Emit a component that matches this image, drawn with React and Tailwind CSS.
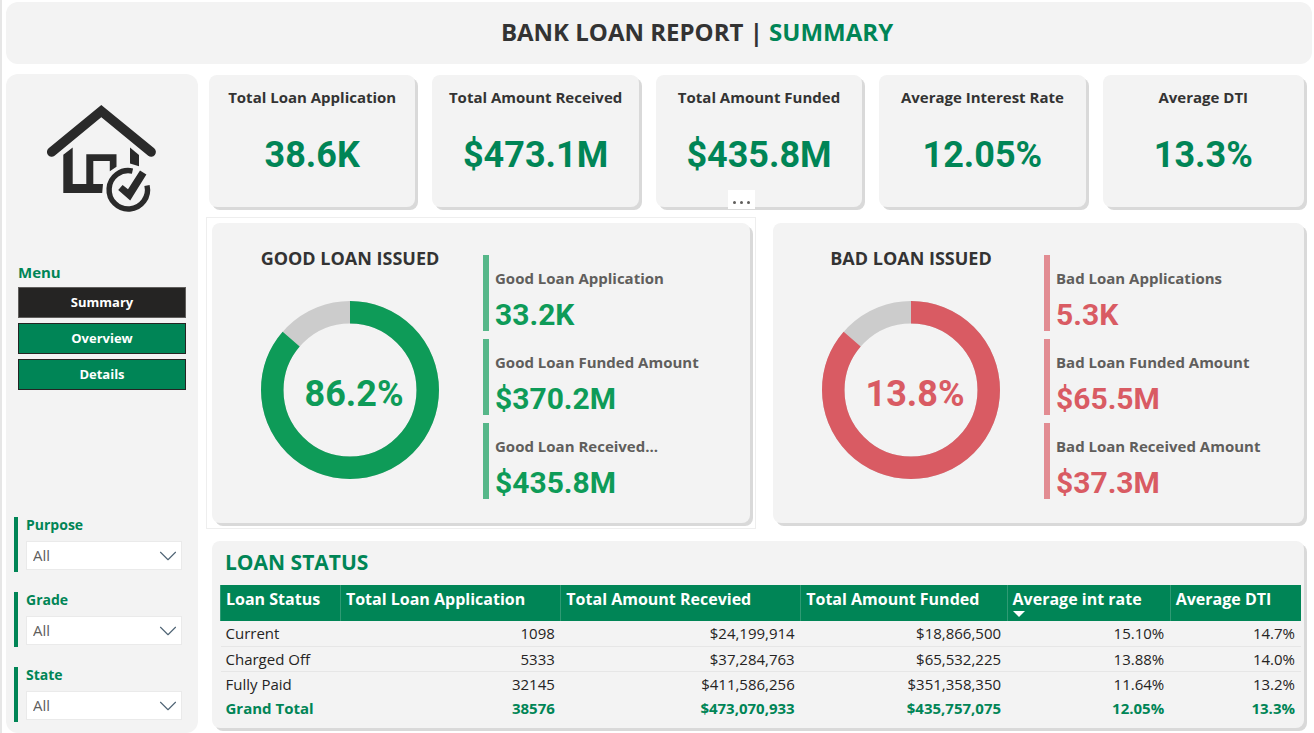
import { ChevronDown } from "lucide-react";

const kpis = [
  { label: "Total Loan Application", value: "38.6K" },
  { label: "Total Amount Received", value: "$473.1M" },
  { label: "Total Amount Funded", value: "$435.8M" },
  { label: "Average Interest Rate", value: "12.05%" },
  { label: "Average DTI", value: "13.3%" },
];

const goodStats = [
  { label: "Good Loan Application", value: "33.2K" },
  { label: "Good Loan Funded Amount", value: "$370.2M" },
  { label: "Good Loan Received...", value: "$435.8M" },
];

const badStats = [
  { label: "Bad Loan Applications", value: "5.3K" },
  { label: "Bad Loan Funded Amount", value: "$65.5M" },
  { label: "Bad Loan Received Amount", value: "$37.3M" },
];

const columns = [
  { name: "Loan Status", width: "w-[11.1%]" },
  { name: "Total Loan Application", width: "w-[20.4%]" },
  { name: "Total Amount Recevied", width: "w-[22.2%]" },
  { name: "Total Amount Funded", width: "w-[19.1%]" },
  { name: "Average int rate", width: "w-[15.1%]", sorted: true },
  { name: "Average DTI", width: "w-[12.1%]" },
];

const rows = [
  ["Current", "1098", "$24,199,914", "$18,866,500", "15.10%", "14.7%"],
  ["Charged Off", "5333", "$37,284,763", "$65,532,225", "13.88%", "14.0%"],
  ["Fully Paid", "32145", "$411,586,256", "$351,358,350", "11.64%", "13.2%"],
];

const totals = ["Grand Total", "38576", "$473,070,933", "$435,757,075", "12.05%", "13.3%"];

function HouseLogo() {
  return (
    <svg viewBox="44 100 116 116" className="h-[116px] w-[116px]" fill="#2a2a2a" aria-hidden="true">
      <path d="M51.6 152 101.3 111 151.2 152" fill="none" stroke="#2a2a2a" strokeWidth="9.4" strokeLinecap="round" />
      <path d="M63.3 154.8 72.7 147.6V184H86.3V154.3H116.5V166.8L109.8 171.2V161H93.3V184H103L102.2 193H63.3Z" />
      <path d="M130 147.5 139 155V166.3L130 163.5Z" />
      <path d="M132.5 171.1A19.2 19.2 0 1 0 147 185.5" fill="none" stroke="#2a2a2a" strokeWidth="5.4" />
      <path d="M118.2 190 122.6 185 128 189.3 140 170.4 146.4 174.5 130.2 200.6Z" />
    </svg>
  );
}

function Donut({ color, value, textClass }) {
  const r = 77.75;
  const length = 2 * Math.PI * r;
  return (
    <div className="grid h-[178px] w-[178px] place-items-center">
      <svg viewBox="0 0 178 178" className="col-start-1 row-start-1 h-full w-full" aria-hidden="true">
        <g fill="none" strokeWidth="22.5" transform="rotate(-90 89 89)">
          <circle cx="89" cy="89" r={r} stroke="#cccccc" />
          <circle cx="89" cy="89" r={r} stroke={color} strokeDasharray={`${length * 0.862} ${length}`} />
        </g>
      </svg>
      <span className={`col-start-1 row-start-1 pt-2 pl-2 font-[Roboto,sans-serif] text-[36px] font-bold ${textClass}`}>{value}</span>
    </div>
  );
}

function LoanPanel({ title, color, textClass, barClass, percent, stats }) {
  return (
    <section className="flex h-[300px] rounded-lg bg-[#f3f3f3] shadow-[3px_3px_0_#d9d9d9]">
      <div className="flex w-[271px] shrink-0 flex-col items-center pt-[23px] pl-[5px]">
        <h2 className="text-[18px] leading-6 font-bold text-[#333]">{title}</h2>
        <div className="mt-[31px]">
          <Donut color={color} value={percent} textClass={textClass} />
        </div>
      </div>
      <dl className="flex min-w-0 flex-1 flex-col gap-2 pt-8">
        {stats.map((s) => (
          <div key={s.label} className={`flex h-[76px] flex-col justify-end gap-[11px] border-l-[6px] pl-[6px] ${barClass}`}>
            <dt className="text-[15px] leading-5 font-bold whitespace-nowrap text-[#605e5c]">{s.label}</dt>
            <dd className={`font-[Roboto,sans-serif] text-[30px] leading-8 font-bold ${textClass}`}>{s.value}</dd>
          </div>
        ))}
      </dl>
    </section>
  );
}

function Slicer({ label }) {
  const id = `slicer-${label.toLowerCase()}`;
  return (
    <div className="h-[55px] border-l-4 border-[#008556] pl-2">
      <label htmlFor={id} className="block text-[14px] leading-4 font-bold text-[#008556]">
        {label}
      </label>
      <div className="mt-2 grid items-center">
        <select
          id={id}
          className="col-start-1 row-start-1 h-[29px] w-full appearance-none border border-[#eaeaea] bg-white px-[6px] text-[15px] text-[#605e5c]"
        >
          <option>All</option>
        </select>
        <ChevronDown
          className="pointer-events-none col-start-1 row-start-1 mr-1 h-[20px] w-[20px] justify-self-end text-[#4f6475]"
          viewBox="4 4 16 16"
          strokeWidth={0.9}
          aria-hidden="true"
        />
      </div>
    </div>
  );
}

export default function App() {
  return (
    <div className="flex min-h-screen flex-col gap-[10px] border-l-2 border-[#e6e6e6] bg-white pt-[2px] pr-[2px] pl-1 font-['Open_Sans','Noto_Sans',sans-serif] text-[#252423]">
      <header className="flex h-[62px] items-center justify-center rounded-xl bg-[#f3f3f3] pb-[2px] pl-19">
        <h1 className="text-[24px] leading-8 font-bold text-[#333]">
          BANK LOAN REPORT | <span className="text-[#008556]">SUMMARY</span>
        </h1>
      </header>

      <div className="flex flex-1 gap-2">
        <aside className="flex w-[192px] shrink-0 flex-col rounded-xl bg-[#f3f3f3] pb-[11px]">
          <div className="flex justify-center pt-[26px]">
            <HouseLogo />
          </div>
          <nav className="mt-[46px] flex flex-col px-3" aria-labelledby="menu-title">
            <h2 id="menu-title" className="text-[15px] leading-5 font-bold text-[#008556]">
              Menu
            </h2>
            <div className="mt-[5px] flex flex-col gap-[5px]">
              <button className="h-[31px] border border-[#605e5c] bg-[#252423] text-[13px] font-bold text-white">Summary</button>
              <button className="h-[31px] border border-[#252423] bg-[#008556] text-[13px] font-bold text-white">Overview</button>
              <button className="h-[31px] border border-[#252423] bg-[#008556] text-[13px] font-bold text-white">Details</button>
            </div>
          </nav>
          <div className="mt-auto flex flex-col gap-5 pr-4 pl-2">
            <Slicer label="Purpose" />
            <Slicer label="Grade" />
            <Slicer label="State" />
          </div>
        </aside>

        <main className="min-w-0 flex-1 pt-px pr-2 pb-[5px]">
          <div className="grid grid-cols-[206fr_206fr_206fr_206fr_201fr] gap-[17px] pl-[3px]">
            {kpis.map((k) => (
              <section key={k.label} className="flex h-[132px] flex-col items-center rounded-lg bg-[#f3f3f3] pt-3 shadow-[3px_3px_0_#d9d9d9]">
                <h2 className="text-[15px] leading-5 font-bold whitespace-nowrap text-[#333]">{k.label}</h2>
                <p className="mt-6 font-[Roboto,sans-serif] text-[36px] leading-12 font-bold text-[#008556]">{k.value}</p>
              </section>
            ))}
          </div>

          <div className="mt-[10px] grid grid-cols-[550fr_531fr] gap-[17px]">
            <div className="relative border border-[#eeeeee] p-[5px]">
              <button
                aria-label="More options"
                className="absolute -top-7 right-0 flex h-[19px] w-[27px] items-center justify-center gap-1 bg-white pt-[6px]"
              >
                <span className="h-[3px] w-[3px] rounded-full bg-[#605e5c]" />
                <span className="h-[3px] w-[3px] rounded-full bg-[#605e5c]" />
                <span className="h-[3px] w-[3px] rounded-full bg-[#605e5c]" />
              </button>
              <LoanPanel
                title="GOOD LOAN ISSUED"
                color="#0e9b58"
                textClass="text-[#0e9b58]"
                barClass="border-[#56b789]"
                percent="86.2%"
                stats={goodStats}
              />
            </div>
            <div className="py-[6px]">
              <LoanPanel
                title="BAD LOAN ISSUED"
                color="#d95b63"
                textClass="text-[#d95b63]"
                barClass="border-[#e28c92]"
                percent="13.8%"
                stats={badStats}
              />
            </div>
          </div>

          <section className="mt-3 ml-[6px] h-[187px] rounded-lg bg-[#f3f3f3] pt-[7px] pr-[3px] pl-2 shadow-[3px_3px_0_#d9d9d9]">
            <h2 className="pl-[5px] text-[21px] leading-7 font-bold text-[#008556]">LOAN STATUS</h2>
            <table className="mt-[9px] w-full table-fixed border-collapse text-[15px] leading-5">
              <thead>
                <tr className="h-9 bg-[#008556] text-left align-top text-[16px] text-white">
                  {columns.map((c) => (
                    <th
                      key={c.name}
                      aria-sort={c.sorted ? "descending" : undefined}
                      className={`border-l border-[#2f9a74] px-[5px] pt-[2px] leading-6 font-bold whitespace-nowrap ${c.width}`}
                    >
                      {c.name}
                      {c.sorted && (
                        <svg viewBox="0 0 12 6" className="block h-[6px] w-3" fill="white" aria-hidden="true">
                          <path d="M0 0H12L6 6Z" />
                        </svg>
                      )}
                    </th>
                  ))}
                </tr>
              </thead>
              <tbody>
                {rows.map((r) => (
                  <tr key={r[0]} className="h-[25px] border-b border-[#e6e6e6] last:border-b-0">
                    {r.map((c, i) => (
                      <td key={columns[i].name} className={i === 0 ? "px-[5px]" : "px-[6px] text-right"}>
                        {c}
                      </td>
                    ))}
                  </tr>
                ))}
              </tbody>
              <tfoot>
                <tr className="h-6 font-bold text-[#008556]">
                  {totals.map((c, i) => (
                    <td key={columns[i].name} className={i === 0 ? "px-[5px]" : "px-[6px] text-right"}>
                      {c}
                    </td>
                  ))}
                </tr>
              </tfoot>
            </table>
          </section>
        </main>
      </div>
    </div>
  );
}
